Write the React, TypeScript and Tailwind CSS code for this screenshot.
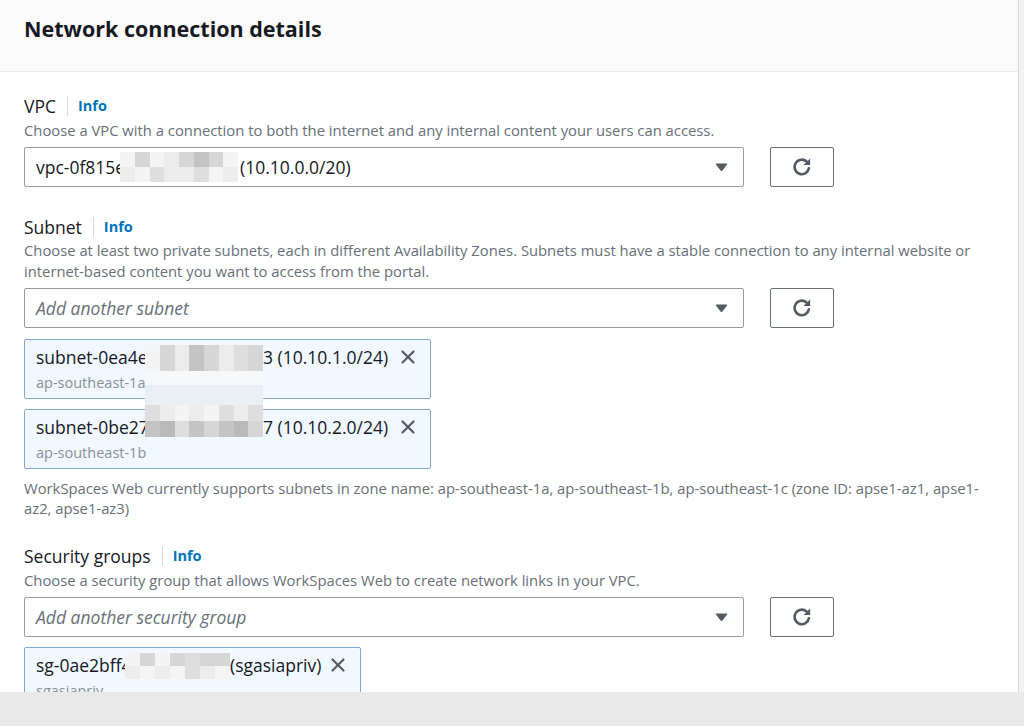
import { X } from 'lucide-react'

const SHADES = ['bg-[#ececec]', 'bg-[#d6d6d6]', 'bg-[#c4c4c4]', 'bg-[#f4f4f4]', 'bg-[#dedede]', 'bg-[#b9b9b9]']

// pixelated redaction block, laid over the text it hides
function Mosaic({ rows, cols, pattern, className }: { rows: number; cols: number; pattern: number[]; className: string }) {
  const cells = Array.from({ length: rows * cols }, (_, i) => pattern[i % pattern.length])
  return (
    <div className={`absolute grid ${className}`} style={{ gridTemplateColumns: `repeat(${cols}, 1fr)` }}>
      {cells.map((s, i) => (
        <div key={i} className={SHADES[s]} />
      ))}
    </div>
  )
}

function Caret() {
  return (
    <svg width="13" height="9" viewBox="0 0 13 9" className="shrink-0">
      <path d="M1 1h11l-5.5 7z" fill="#545b64" stroke="#545b64" strokeLinejoin="round" />
    </svg>
  )
}

function RefreshButton() {
  return (
    <button className="w-[64px] h-[40px] border border-[#687078] rounded-[2px] bg-white flex items-center justify-center">
      <svg width="22" height="22" viewBox="0 0 20 20">
        <path d="M16.3 11.2A6.6 6.6 0 1 1 14.2 5" fill="none" stroke="#545b64" strokeWidth="2.4" strokeLinecap="round" />
        <path d="M17.4 2.2v6h-6z" fill="#545b64" />
      </svg>
    </button>
  )
}

function Label({ text }: { text: string }) {
  return (
    <div className="flex items-center h-[22px]">
      <span className="text-[17.5px] text-[#16191f]">{text}</span>
      <span className="w-px h-[20px] bg-[#d5dbdb] ml-[11px] mr-[10px]" />
      <span className="text-[14.5px] font-bold text-[#0073bb]">Info</span>
    </div>
  )
}

function SelectRow({ children }: { children: React.ReactNode }) {
  return (
    <div className="flex items-center gap-[26px] mt-[6px]">
      <div className="w-[720px] h-[40px] border border-[#949c9c] rounded-[2px] flex items-center justify-between pl-[11px] pr-[15px] relative">
        {children}
        <Caret />
      </div>
      <RefreshButton />
    </div>
  )
}

function Token({ lead, tail, sub, width, leadWidth }: { lead: string; tail: string; sub: string; width: string; leadWidth: string }) {
  return (
    <div className={`${width} border border-[#7ea9d9] rounded-[2px] bg-[#f1f8ff] pl-[11px] pr-[11px] pt-[5px] pb-[5px]`}>
      <div className="flex items-center h-[24px]">
        <span className={`${leadWidth} shrink-0 text-[17.5px] text-[#16191f] overflow-hidden whitespace-nowrap`}>{lead}</span>
        <span className="text-[17.5px] text-[#16191f] whitespace-nowrap">{tail}</span>
        <X className="ml-auto shrink-0" size={22} strokeWidth={2.4} color="#545b64" />
      </div>
      <div className="h-[20px] mt-[4px] text-[14.5px] leading-[20px] text-[#879196]">{sub}</div>
    </div>
  )
}

export default function App() {
  return (
    <div className="w-[1024px] h-[726px] bg-[#e9e9e9] flex flex-col overflow-hidden font-['Open_Sans',sans-serif]">
      <div className="flex h-[692px] shrink-0">
        <div className="w-[1019px] bg-white border-r border-[#d5d5d5] flex flex-col overflow-hidden">
          {/* Cabeçalho */}
          <div className="h-[72px] shrink-0 bg-[#fafafa] border-b border-[#eaeded] px-6 pt-[15px]">
            <h2 className="text-[21.5px] leading-[28px] font-bold text-[#16191f]">Network connection details</h2>
          </div>

          <div className="px-6 pt-[23px] flex flex-col">
            {/* VPC */}
            <Label text="VPC" />
            <p className="mt-[3px] text-[14.8px] leading-[21px] text-[#687078]">
              Choose a VPC with a connection to both the internet and any internal content your users can access.
            </p>
            <SelectRow>
              <div className="flex items-center text-[17.5px] text-[#16191f] whitespace-nowrap">
                <span className="w-[204px] overflow-hidden">vpc-0f815e</span>
                <span>(10.10.0.0/20)</span>
              </div>
              <Mosaic rows={2} cols={8} pattern={[3, 1, 3, 0, 1, 2, 1, 3, 0, 3, 4, 0, 0, 4, 3, 0]} className="left-[95px] top-[4px] w-[118px] h-[30px]" />
            </SelectRow>

            {/* Subnet */}
            <div className="mt-[29px]">
              <Label text="Subnet" />
            </div>
            <p className="mt-[2px] text-[14.8px] leading-[21px] text-[#687078]">
              Choose at least two private subnets, each in different Availability Zones. Subnets must have a stable connection to any internal website or internet-based content you want to access from the portal.
            </p>
            <SelectRow>
              <span className="text-[17.5px] italic text-[#687078]">Add another subnet</span>
            </SelectRow>
            <div className="relative mt-[11px] flex flex-col gap-[10px]">
              <Token lead="subnet-0ea4e" tail="3 (10.10.1.0/24)" sub="ap-southeast-1a" width="w-[407px]" leadWidth="w-[227px]" />
              <Token lead="subnet-0be27" tail="7 (10.10.2.0/24)" sub="ap-southeast-1b" width="w-[407px]" leadWidth="w-[227px]" />
              <div className="absolute left-[121px] top-[6px] w-[118px] h-[92px] flex flex-col">
                <div className="h-[26px] grid grid-cols-8">
                  {[3, 1, 0, 2, 1, 0, 4, 1].map((s, i) => (
                    <div key={i} className={SHADES[s]} />
                  ))}
                </div>
                <div className="h-[14px] bg-[#f6f8fa]" />
                <div className="h-[20px] bg-[#e9eff4]" />
                <div className="h-[16px] grid grid-cols-8">
                  {[4, 0, 3, 0, 3, 4, 0, 4].map((s, i) => (
                    <div key={i} className={SHADES[s]} />
                  ))}
                </div>
                <div className="h-[16px] grid grid-cols-8">
                  {[2, 5, 4, 2, 1, 2, 5, 1].map((s, i) => (
                    <div key={i} className={SHADES[s]} />
                  ))}
                </div>
              </div>
            </div>
            <p className="mt-[9px] text-[14.8px] leading-[20px] text-[#687078]">
              WorkSpaces Web currently supports subnets in zone name: ap-southeast-1a, ap-southeast-1b, ap-southeast-1c (zone ID: apse1-az1, apse1-az2, apse1-az3)
            </p>

            {/* Security groups */}
            <div className="mt-[27px]">
              <Label text="Security groups" />
            </div>
            <p className="mt-[3px] text-[14.8px] leading-[21px] text-[#687078]">
              Choose a security group that allows WorkSpaces Web to create network links in your VPC.
            </p>
            <SelectRow>
              <span className="text-[17.5px] italic text-[#687078]">Add another security group</span>
            </SelectRow>
            <div className="relative mt-[10px]">
              <Token lead="sg-0ae2bff4" tail="(sgasiapriv)" sub="sgasiapriv" width="w-[337px]" leadWidth="w-[194px]" />
              <Mosaic rows={2} cols={7} pattern={[3, 1, 3, 1, 4, 1, 1, 0, 3, 0, 3, 4, 0, 3]} className="left-[101px] top-[6px] w-[105px] h-[26px]" />
            </div>
          </div>
        </div>
        <div className="flex-1 bg-[#f2f2f2]" />
      </div>
      <div className="flex-1 bg-[#e9e9e9]" />
    </div>
  )
}
